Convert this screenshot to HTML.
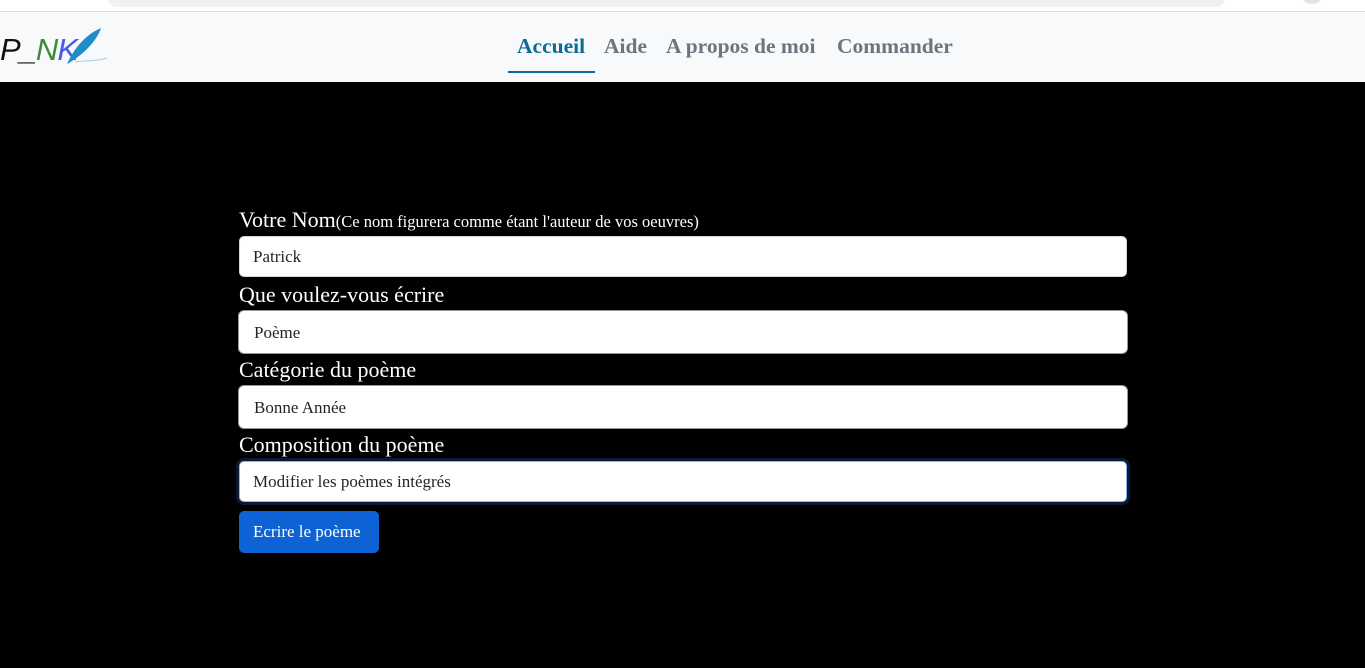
<!DOCTYPE html>
<html><head><meta charset="utf-8"><style>
*{box-sizing:border-box;margin:0;padding:0}
body{width:1365px;height:668px;overflow:hidden;background:#000;font-family:"Liberation Serif",serif;position:relative}
.top{position:absolute;left:0;top:0;width:1365px;height:12px;background:#fff;border-bottom:1px solid #dadce0}
.pill{position:absolute;left:108px;top:-10px;width:1117px;height:17px;background:#f0f1f3;border-radius:9px}
.circ{position:absolute;left:1303px;top:-8px;width:18px;height:12px;background:#e3e4e7;border-radius:50%}
.nav{position:absolute;left:0;top:12px;width:1365px;height:70px;background:#f8f9fa}
.logo{position:absolute;left:0;top:20px;font-family:"Liberation Sans",sans-serif;font-style:italic;font-size:31px;letter-spacing:-1px}
.nav a{position:absolute;top:22px;font-size:21.5px;font-weight:bold;color:#6c757d;text-decoration:none}
.act{color:#0d6b9a!important}
.ul{position:absolute;left:508px;top:71px;width:87px;height:2px;background:#0d6b9a}
label{position:absolute;left:239px;color:#fff;font-size:22px}
label small{font-size:16.5px}
.in{position:absolute;left:239px;width:888px;height:41px;background:#fff;border:1px solid #ced4da;border-radius:5px;font-size:17px;color:#212529;padding:10px 13px;line-height:20px}
.b2{border:2px solid #fff;box-shadow:0 0 0 1px #999}
.foc{box-shadow:0 0 0 3px #0a1a33;border-color:#86b7fe}
.btn{position:absolute;left:239px;top:511px;width:140px;height:42px;background:#0d62d6;border-radius:5px;color:#fff;font-size:17px;padding:11px 14px}
</style></head><body>
<div class="top"><div class="pill"></div><div class="circ"></div></div>
<div class="nav">
<div class="logo"><span style="color:#111">P_</span><span style="color:#3f8a3a">N</span><span style="color:#4a5ae8">K</span></div>
<svg style="position:absolute;left:65px;top:14px" width="45" height="40" viewBox="0 0 45 40"><path d="M2 38 C8 25 18 10 36 2 C33 12 22 26 4 37Z" fill="#1e8ec8"/><path d="M10 36 C20 34 30 36 42 32" stroke="#9fd0ea" fill="none" stroke-width="1"/></svg>
<a class="act" style="left:517px">Accueil</a>
<a style="left:604px">Aide</a>
<a style="left:666px">A propos de moi</a>
<a style="left:837px">Commander</a>
</div>
<div class="ul"></div>
<label style="top:207px">Votre Nom<small>(Ce nom figurera comme étant l'auteur de vos oeuvres)</small></label>
<div class="in" style="top:236px">Patrick</div>
<label style="top:282px">Que voulez-vous écrire</label>
<div class="in b2" style="top:311px;height:42px">Poème</div>
<label style="top:357px">Catégorie du poème</label>
<div class="in b2" style="top:386px;height:42px">Bonne Année</div>
<label style="top:432px">Composition du poème</label>
<div class="in foc" style="top:461px">Modifier les poèmes intégrés</div>
<div class="btn">Ecrire le poème</div>
</body></html>
